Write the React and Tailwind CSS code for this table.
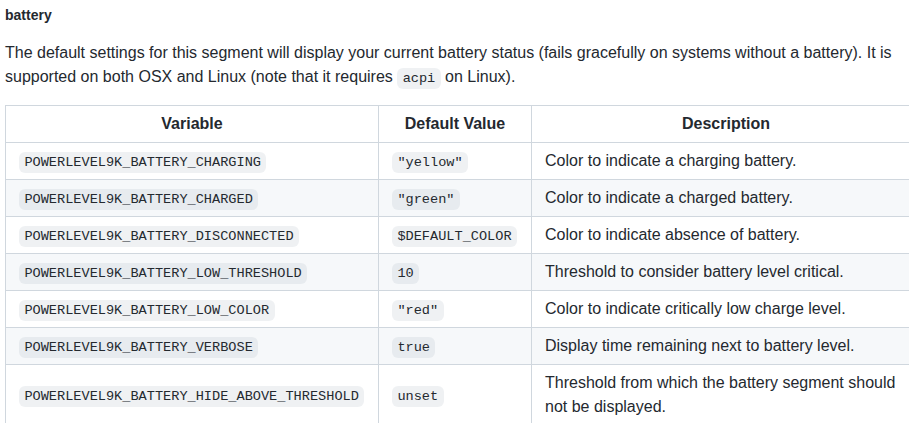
import React from "react";

const rows = [
  ["POWERLEVEL9K_BATTERY_CHARGING", '"yellow"', "Color to indicate a charging battery."],
  ["POWERLEVEL9K_BATTERY_CHARGED", '"green"', "Color to indicate a charged battery."],
  ["POWERLEVEL9K_BATTERY_DISCONNECTED", "$DEFAULT_COLOR", "Color to indicate absence of battery."],
  ["POWERLEVEL9K_BATTERY_LOW_THRESHOLD", "10", "Threshold to consider battery level critical."],
  ["POWERLEVEL9K_BATTERY_LOW_COLOR", '"red"', "Color to indicate critically low charge level."],
  ["POWERLEVEL9K_BATTERY_VERBOSE", "true", "Display time remaining next to battery level."],
  [
    "POWERLEVEL9K_BATTERY_HIDE_ABOVE_THRESHOLD",
    "unset",
    "Threshold from which the battery segment should not be displayed.",
  ],
];

const Code = ({ children }) => (
  <code className="font-['Liberation_Mono',monospace] text-[13.6px] leading-[1] bg-[#afb8c133] rounded-[6px] px-[5.4px] py-[3px]">
    {children}
  </code>
);

const App = () => {
  return (
    <div className="px-[5px] pt-[7px] text-[#24292f] font-['Liberation_Sans',Arial,sans-serif] overflow-hidden w-[909px]">
      <h5 className="text-[14px] font-bold leading-[17.5px] mb-[16px]">battery</h5>
      <p className="text-[16px] leading-[24px] mb-[16px]">
        The default settings for this segment will display your current battery status (fails gracefully on systems
        without a battery). It is supported on both OSX and Linux (note that it requires <Code>acpi</Code> on Linux).
      </p>
      <table className="border-collapse text-[16px] leading-[24px] w-[916px] table-fixed">
        <colgroup>
          <col className="w-[373px]" />
          <col className="w-[153px]" />
          <col />
        </colgroup>
        <thead>
          <tr>
            <th className="border border-[#d0d7de] px-[13px] py-[6px] font-bold text-center">Variable</th>
            <th className="border border-[#d0d7de] px-[13px] py-[6px] font-bold text-center">Default Value</th>
            <th className="border border-[#d0d7de] px-[13px] py-[6px] font-bold text-center">Description</th>
          </tr>
        </thead>
        <tbody>
          {rows.map(([name, value, desc], i) => (
            <tr key={name} className={i % 2 === 1 ? "bg-[#f6f8fa]" : "bg-white"}>
              <td className="border border-[#d0d7de] px-[13px] py-[6px] whitespace-nowrap">
                <Code>{name}</Code>
              </td>
              <td className="border border-[#d0d7de] px-[13px] py-[6px] whitespace-nowrap">
                <Code>{value}</Code>
              </td>
              <td className="border border-[#d0d7de] px-[13px] py-[6px]">{desc}</td>
            </tr>
          ))}
        </tbody>
      </table>
    </div>
  );
};

export default App;
